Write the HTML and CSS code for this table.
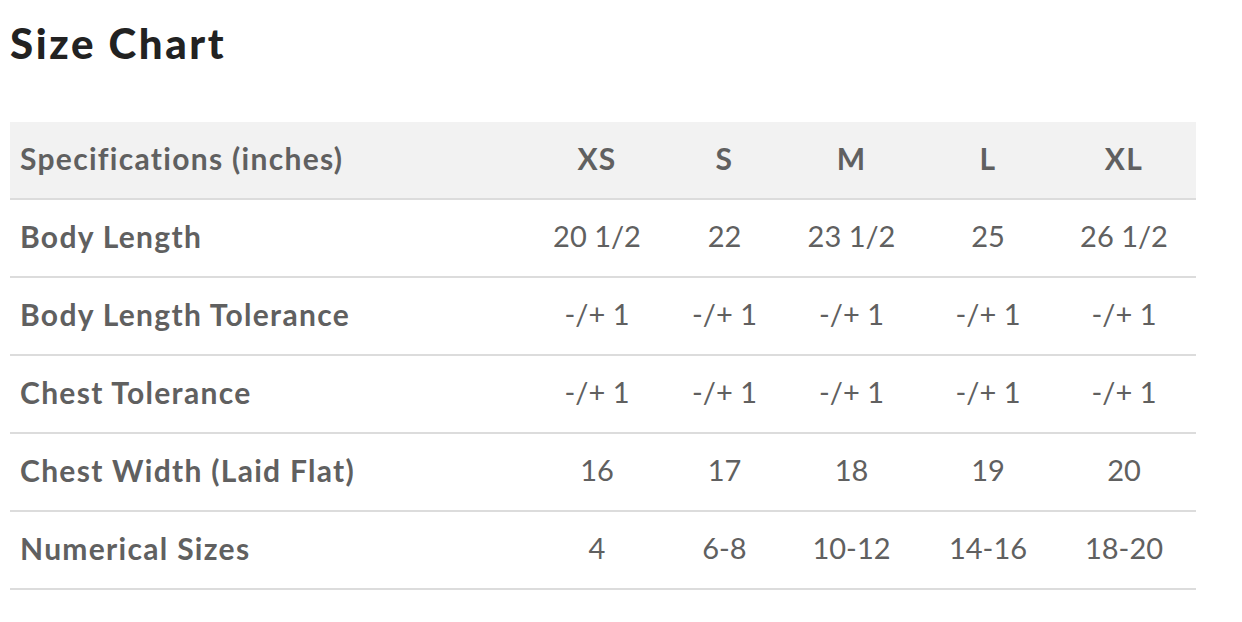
FILE: index.html
```html
<!DOCTYPE html>
<html>
<head>
<meta charset="utf-8">
<link rel="stylesheet" href="styles.css">
</head>
<body>
<h1 class="title">Size Chart</h1>
<table class="chart">
  <colgroup>
    <col class="c-label"><col class="c-xs"><col class="c-s"><col class="c-m"><col class="c-l"><col class="c-xl"><col class="c-pad">
  </colgroup>
  <thead>
    <tr><th class="label">Specifications (inches)</th><th>XS</th><th>S</th><th>M</th><th>L</th><th>XL</th><th class="pad"></th></tr>
  </thead>
  <tbody>
    <tr><td class="label">Body Length</td><td>20 1/2</td><td>22</td><td>23 1/2</td><td>25</td><td>26 1/2</td><td class="pad"></td></tr>
    <tr><td class="label">Body Length Tolerance</td><td>-/+ 1</td><td>-/+ 1</td><td>-/+ 1</td><td>-/+ 1</td><td>-/+ 1</td><td class="pad"></td></tr>
    <tr><td class="label">Chest Tolerance</td><td>-/+ 1</td><td>-/+ 1</td><td>-/+ 1</td><td>-/+ 1</td><td>-/+ 1</td><td class="pad"></td></tr>
    <tr><td class="label">Chest Width (Laid Flat)</td><td>16</td><td>17</td><td>18</td><td>19</td><td>20</td><td class="pad"></td></tr>
    <tr><td class="label">Numerical Sizes</td><td>4</td><td>6-8</td><td>10-12</td><td>14-16</td><td>18-20</td><td class="pad"></td></tr>
  </tbody>
</table>
</body>
</html>
```
FILE: styles.css
```css
html, body {
  margin: 0;
  padding: 0;
  background: #ffffff;
}
body {
  padding: 0 0 0 10px;
  font-family: Lato, "Noto Sans", sans-serif;
}
.title {
  margin: 0;
  padding-top: 18px;
  height: 122px;
  box-sizing: border-box;
  font-size: 42px;
  line-height: 50px;
  font-weight: 900;
  letter-spacing: 2.6px;
  color: #222222;
}
.chart {
  width: 1186px;
  border-collapse: collapse;
  table-layout: fixed;
}
.c-label { width: 523px; }
.c-xs { width: 128px; }
.c-s { width: 127px; }
.c-m { width: 127px; }
.c-l { width: 146px; }
.c-xl { width: 126px; }
.c-pad { width: 9px; }
.chart th, .chart td {
  height: 71px;
  padding: 0 0 5px 0;
  text-align: center;
  vertical-align: middle;
  border-bottom: 2px solid #dcdcdc;
  color: #606060;
  font-size: 29px;
}
.chart thead th {
  background: #f2f2f2;
  font-weight: 700;
  font-size: 30px;
  letter-spacing: 1.3px;
}
.chart td {
  font-weight: 400;
}
.chart .label {
  text-align: left;
  padding-left: 10px;
  font-weight: 700;
  font-size: 30px;
  letter-spacing: 1.3px;
}
```
